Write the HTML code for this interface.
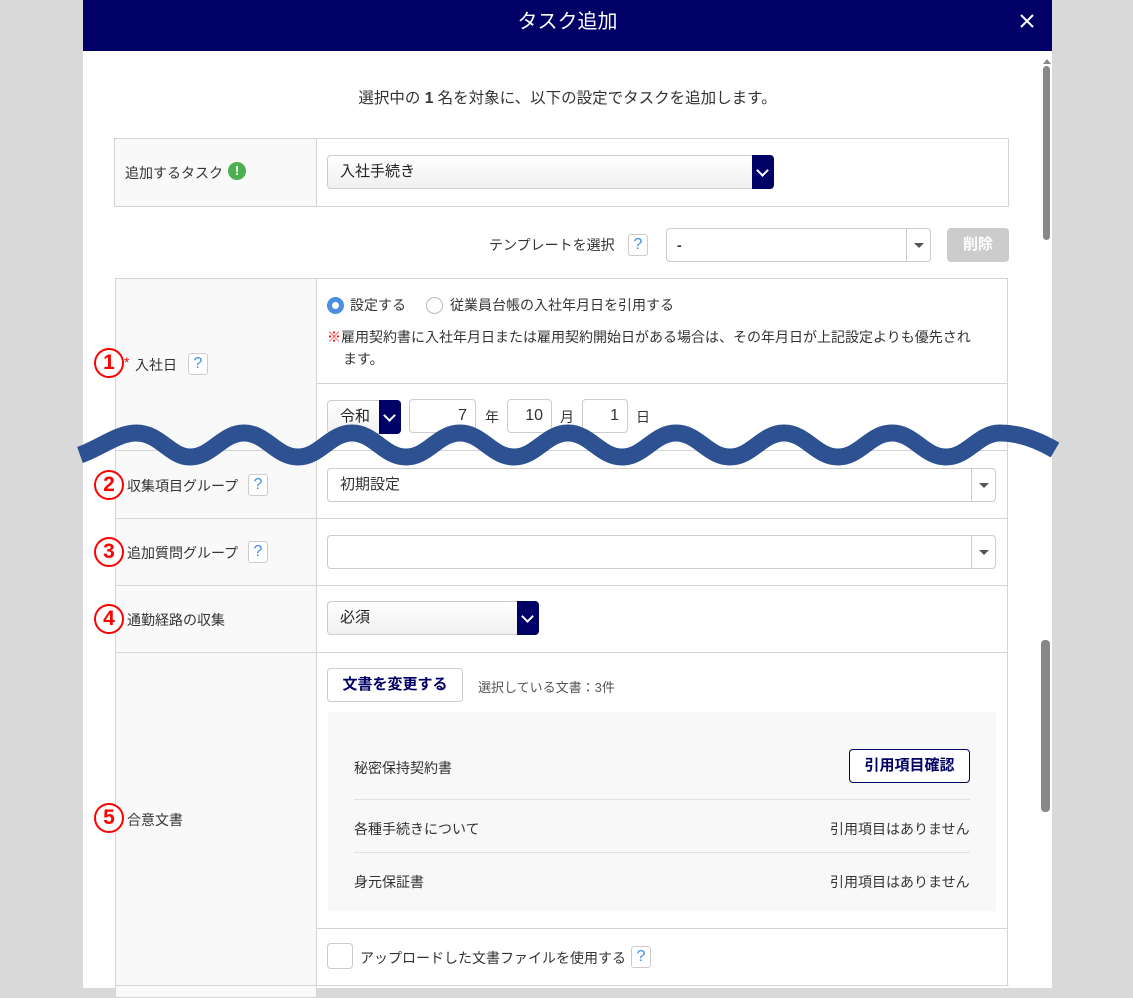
<!DOCTYPE html>
<html><head><meta charset="utf-8"><style>
*{box-sizing:border-box;margin:0;padding:0}
body{width:1133px;height:988px;background:#d9d9d9;position:relative;overflow:hidden;font-family:"Liberation Sans","Noto Sans CJK JP",sans-serif;color:#333;font-size:14px}
.a{position:absolute}
.modal{left:83px;top:0;width:969px;height:988px;background:#fff}
.hdr{left:83px;top:0;width:969px;height:51px;background:#000066;color:#fff;font-size:20px;text-align:center;line-height:44px}
.lab{background:#f9f9f9;border:1px solid #d4d4d4}
.cell{border:1px solid #d4d4d4;background:#fff}
.sel{border:1px solid #ccc;border-radius:4px;background:linear-gradient(#fff,#f0f0f0);font-size:15px;padding-left:12px;color:#222}
.arr{position:absolute;right:-1px;top:-1px;bottom:-1px;width:22px;background:#000066;border-radius:0 4px 4px 0}
.arr:after{content:"";position:absolute;left:6px;top:11px;width:7px;height:7px;border-right:2.5px solid #fff;border-bottom:2.5px solid #fff;transform:rotate(45deg)}
.dd{position:absolute;right:0;top:0;bottom:0;width:24px;border-left:1px solid #ccc}
.dd:after{content:"";position:absolute;left:7px;top:14px;border:5px solid transparent;border-top:5px solid #555}
.q{width:20px;height:22px;border:1px solid #ccc;border-radius:3px;color:#3a8ee6;font-size:16px;text-align:center;line-height:20px;background:#fff}
.num{width:30px;height:30px;border:2px solid #f00;border-radius:50%;color:#f00;font-weight:bold;font-size:21px;text-align:center;line-height:26px;background:#fff}
.in{border:1px solid #ccc;border-radius:4px;background:#fff;text-align:right;padding-right:8px;font-size:16px;line-height:32px}
.btn{border:1px solid #ccc;border-radius:4px;background:#fff;color:#000066;font-weight:bold;font-size:15px;text-align:center}
</style></head><body>
<div class="a modal"></div>
<div class="a hdr">タスク追加</div>
<svg class="a" style="left:1020px;top:14px" width="14" height="14"><path d="M1 1L13 13M13 1L1 13" stroke="#fff" stroke-width="2"/></svg>
<!-- scrollbar -->
<div class="a" style="left:1043px;top:55px;border:4px solid transparent;border-bottom:5px solid #888;width:0"></div>
<div class="a" style="left:1043px;top:66px;width:7px;height:174px;background:#888;border-radius:4px"></div>
<div class="a" style="left:1041px;top:640px;width:9px;height:172px;background:#888;border-radius:4px"></div>

<div class="a" style="left:83px;top:86px;width:969px;text-align:center;font-size:15.5px">選択中の <b>1</b> 名を対象に、以下の設定でタスクを追加します。</div>

<div class="a lab" style="left:114px;top:138px;width:203px;height:69px"></div>
<div class="a cell" style="left:316px;top:138px;width:693px;height:69px"></div>
<div class="a" style="left:125px;top:163px">追加するタスク</div>
<div class="a" style="left:228px;top:162px;width:18px;height:18px;border-radius:50%;background:#4caf50;color:#fff;font-weight:bold;font-size:13px;text-align:center;line-height:18px">!</div>
<div class="a sel" style="left:327px;top:155px;width:447px;height:34px;line-height:32px">入社手続き<div class="arr"></div></div>

<div class="a" style="left:489px;top:235px">テンプレートを選択</div>
<div class="a q" style="left:628px;top:234px">?</div>
<div class="a" style="left:666px;top:228px;width:265px;height:34px;border:1px solid #ccc;border-radius:4px;padding-left:10px;line-height:32px;font-weight:bold">-<div class="dd"></div></div>
<div class="a" style="left:947px;top:228px;width:62px;height:34px;background:#ccc;border-radius:4px;color:#fff;font-weight:bold;font-size:15px;text-align:center;line-height:34px">削除</div>

<!-- table 2 -->
<div class="a lab" style="left:115px;top:278px;width:202px;height:720px"></div>
<div class="a cell" style="left:316px;top:278px;width:692px;height:106px"></div>
<div class="a cell" style="left:316px;top:383px;width:692px;height:68px"></div>
<div class="a" style="left:327px;top:297px;width:17px;height:17px;border-radius:50%;border:5px solid #4a90e2;background:#fff"></div>
<div class="a" style="left:350px;top:295px">設定する</div>
<div class="a" style="left:426px;top:297px;width:17px;height:17px;border-radius:50%;border:1px solid #bbb"></div>
<div class="a" style="left:450px;top:295px">従業員台帳の入社年月日を引用する</div>
<div class="a" style="left:327px;top:326px;width:655px;line-height:22px;font-size:14px;padding-left:16px;text-indent:-16px"><span style="color:#f00;font-weight:bold">※</span>雇用契約書に入社年月日または雇用契約開始日がある場合は、その年月日が上記設定よりも優先されます。</div>
<div class="a num" style="left:94px;top:348px">1</div>
<div class="a" style="left:124px;top:354px;color:#f00">*</div>
<div class="a" style="left:135px;top:355px">入社日</div>
<div class="a q" style="left:188px;top:353px">?</div>
<div class="a sel" style="left:327px;top:400px;width:74px;height:34px;line-height:32px">令和<div class="arr"></div></div>
<div class="a in" style="left:409px;top:399px;width:67px;height:34px">7</div>
<div class="a" style="left:485px;top:407px">年</div>
<div class="a in" style="left:507px;top:399px;width:45px;height:34px">10</div>
<div class="a" style="left:560px;top:407px">月</div>
<div class="a in" style="left:582px;top:399px;width:46px;height:34px">1</div>
<div class="a" style="left:636px;top:407px">日</div>

<div class="a cell" style="left:316px;top:450px;width:692px;height:69px"></div>
<div class="a lab" style="left:115px;top:450px;width:202px;height:69px"></div>
<div class="a cell" style="left:316px;top:518px;width:692px;height:68px"></div>
<div class="a lab" style="left:115px;top:518px;width:202px;height:68px"></div>
<div class="a cell" style="left:316px;top:585px;width:692px;height:68px"></div>
<div class="a lab" style="left:115px;top:585px;width:202px;height:68px"></div>
<div class="a cell" style="left:316px;top:652px;width:692px;height:277px"></div>
<div class="a cell" style="left:316px;top:928px;width:692px;height:58px"></div>
<div class="a lab" style="left:115px;top:652px;width:202px;height:334px"></div>
<div class="a" style="left:115px;top:985px;width:894px;height:3px;border-top:1px solid #d4d4d4"></div>

<div class="a num" style="left:94px;top:470px">2</div>
<div class="a" style="left:127px;top:476px">収集項目グループ</div>
<div class="a q" style="left:248px;top:474px">?</div>
<div class="a" style="left:327px;top:468px;width:669px;height:34px;border:1px solid #ccc;border-radius:4px;padding-left:12px;line-height:32px;font-size:15px">初期設定<div class="dd"></div></div>

<div class="a num" style="left:94px;top:537px">3</div>
<div class="a" style="left:127px;top:543px">追加質問グループ</div>
<div class="a q" style="left:248px;top:541px">?</div>
<div class="a" style="left:327px;top:535px;width:669px;height:34px;border:1px solid #ccc;border-radius:4px"><div class="dd"></div></div>

<div class="a num" style="left:94px;top:604px">4</div>
<div class="a" style="left:127px;top:610px">通勤経路の収集</div>
<div class="a sel" style="left:327px;top:601px;width:212px;height:34px;line-height:32px">必須<div class="arr"></div></div>

<div class="a num" style="left:94px;top:803px">5</div>
<div class="a" style="left:127px;top:810px">合意文書</div>
<div class="a btn" style="left:327px;top:668px;width:136px;height:34px;line-height:32px">文書を変更する</div>
<div class="a" style="left:478px;top:677px;font-size:13px;color:#555">選択している文書：3件</div>
<div class="a" style="left:328px;top:712px;width:668px;height:199px;background:#f8f8f8"></div>
<div class="a" style="left:354px;top:758px">秘密保持契約書</div>
<div class="a btn" style="left:849px;top:749px;width:121px;height:34px;line-height:32px;border-color:#000066">引用項目確認</div>
<div class="a" style="left:354px;top:799px;width:616px;border-top:1px solid #e2e2e2"></div>
<div class="a" style="left:354px;top:819px">各種手続きについて</div>
<div class="a" style="left:830px;top:819px">引用項目はありません</div>
<div class="a" style="left:354px;top:852px;width:616px;border-top:1px solid #e2e2e2"></div>
<div class="a" style="left:354px;top:872px">身元保証書</div>
<div class="a" style="left:830px;top:872px">引用項目はありません</div>

<div class="a" style="left:327px;top:943px;width:26px;height:26px;border:1px solid #ccc;border-radius:4px;background:#fff"></div>
<div class="a" style="left:360px;top:948px">アップロードした文書ファイルを使用する</div>
<div class="a q" style="left:631px;top:946px">?</div>

<svg class="a" style="left:0;top:0" width="1133" height="988"><path d="M80 455 C100 448 118 433 136 433 C160 433 170 457 190 457 C212 457 222 433 244 433 C266 433 276 457 298 457 C320 457 330 433 352 433 C374 433 384 457 406 457 C428 457 438 433 460 433 C482 433 492 457 514 457 C536 457 546 433 568 433 C590 433 600 457 622 457 C644 457 654 433 676 433 C698 433 708 457 730 457 C752 457 762 433 784 433 C806 433 816 457 838 457 C860 457 870 433 892 433 C914 433 924 457 946 457 C968 457 978 433 1000 433 C1020 433 1038 440 1055 450" fill="none" stroke="#2d5191" stroke-width="17"/></svg>
</body></html>
